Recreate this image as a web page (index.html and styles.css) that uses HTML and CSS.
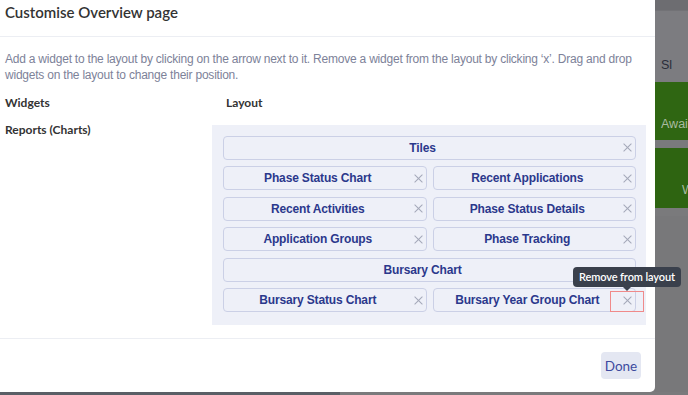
FILE: index.html
```html
<!DOCTYPE html>
<html>
<head>
<meta charset="utf-8">
<link rel="stylesheet" href="styles.css">
</head>
<body>
<div class="page">
  <div class="modal">
    <div class="modal-header">
      <h1 class="title">Customise Overview page</h1>
    </div>
    <div class="modal-body">
      <p class="desc">Add a widget to the layout by clicking on the arrow next to it. Remove a widget from the layout by clicking ‘x’. Drag and drop widgets on the layout to change their position.</p>
      <div class="columns">
        <div class="label">Widgets</div>
        <div class="label label-layout">Layout</div>
        <div class="label label-sub">Reports (Charts)</div>
        <div class="layout-box">
          <div class="tile tile-full"><span class="tile-name">Tiles</span><span class="x"></span></div>
          <div class="tile"><span class="tile-name">Phase Status Chart</span><span class="x"></span></div>
          <div class="tile"><span class="tile-name">Recent Applications</span><span class="x"></span></div>
          <div class="tile"><span class="tile-name">Recent Activities</span><span class="x"></span></div>
          <div class="tile"><span class="tile-name">Phase Status Details</span><span class="x"></span></div>
          <div class="tile"><span class="tile-name">Application Groups</span><span class="x"></span></div>
          <div class="tile"><span class="tile-name">Phase Tracking</span><span class="x"></span></div>
          <div class="tile tile-full"><span class="tile-name">Bursary Chart</span></div>
          <div class="tile"><span class="tile-name">Bursary Status Chart</span><span class="x"></span></div>
          <div class="tile tile-hover"><span class="tile-name">Bursary Year Group Chart</span><span class="x"></span>
            <span class="highlight"></span>
            <span class="tooltip">Remove from layout</span>
          </div>
        </div>
      </div>
    </div>
    <div class="modal-footer">
      <button class="done">Done</button>
    </div>
  </div>
  <div class="backdrop">
    <div class="bd-top"></div>
    <div class="bd-bar"><span class="bd-text">Sl</span></div>
    <div class="bd-green"><span class="bd-gtext">Awai</span></div>
    <div class="bd-green bd-green2"><span class="bd-gtext bd-w">W</span></div>
    <div class="bd-rest"></div>
  </div>
</div>
<div class="bottom-strip"><span class="strip-a"></span><span class="strip-b"></span></div>
</body>
</html>
```

FILE: styles.css
```css
* { box-sizing: border-box; }
html, body { margin: 0; padding: 0; }
body {
  width: 688px;
  height: 395px;
  overflow: hidden;
  background: #7a7a7c;
  font-family: "Liberation Sans", Arial, sans-serif;
}
.page {
  display: flex;
  height: 392px;
}
.modal {
  width: 655px;
  flex: none;
  height: 392px;
  background: #fff;
  border-radius: 0 0 5px 0;
  display: flex;
  flex-direction: column;
}
.modal-header {
  height: 37px;
  border-bottom: 1px solid #eceef3;
  padding: 3px 5px 0;
}
.title {
  margin: 0;
  font-family: "Lato", sans-serif;
  font-weight: 600;
  font-size: 15px;
  line-height: 18px;
  color: #333;
}
.modal-body {
  padding: 14px 5px 0;
  height: 302px;
  border-bottom: 1px solid #eceef3;
}
.desc {
  margin: 0;
  font-family: "Liberation Sans", Arial, sans-serif;
  font-size: 12px;
  letter-spacing: -0.22px;
  line-height: 16px;
  color: #7d8299;
}
.columns {
  display: grid;
  grid-template-columns: 207px 434px;
  grid-template-rows: 27px auto;
  margin-top: 12px;
}
.label {
  font-family: "Lato", sans-serif;
  font-weight: 700;
  font-size: 12px;
  line-height: 16px;
  color: #333;
}
.label-layout { padding-left: 14px; }
.layout-box {
  margin-top: 3px;
  background: #eef0f8;
  height: 200px;
  padding: 10.5px 10px 0 11px;
  display: grid;
  grid-template-columns: 1fr 1fr;
  column-gap: 6px;
  row-gap: 6.5px;
  grid-auto-rows: 24px;
  align-content: start;
}
.tile {
  position: relative;
  border: 1px solid #cbd0e6;
  border-radius: 4px;
  background: #eef0f8;
  display: flex;
  align-items: center;
  justify-content: center;
  padding: 0 24px 0 10px;
}
.tile-full { grid-column: 1 / -1; }
.tile-name {
  font-family: "Liberation Sans", Arial, sans-serif;
  font-weight: 700;
  font-size: 12px;
  letter-spacing: -0.15px;
  color: #2b388c;
  white-space: nowrap;
}
.x {
  position: absolute;
  right: 3px;
  top: 6.5px;
  width: 9px;
  height: 9px;
}
.x::before, .x::after {
  content: "";
  position: absolute;
  left: -1px;
  top: 4px;
  width: 11px;
  height: 1px;
  background: #a4a8b8;
  transform: rotate(45deg);
}
.x::after { transform: rotate(-45deg); }
.highlight {
  position: absolute;
  right: -9px;
  top: 2px;
  width: 34px;
  height: 21px;
  border: 1px solid #f08a8a;
}
.tooltip {
  position: absolute;
  right: -46px;
  top: -22px;
  height: 20px;
  padding: 0 6px;
  background: #3a404c;
  color: #fff;
  border-radius: 4px;
  font-family: "Lato", sans-serif;
  font-weight: 600;
  font-size: 11px;
  letter-spacing: -0.1px;
  line-height: 20px;
  white-space: nowrap;
}
.tooltip::after {
  content: "";
  position: absolute;
  left: 50px;
  bottom: -4px;
  border-left: 4px solid transparent;
  border-right: 4px solid transparent;
  border-top: 4px solid #3a404c;
}
.modal-footer {
  flex: 1;
  display: flex;
  justify-content: flex-end;
  align-items: flex-start;
  padding: 13px 14px 0 0;
}
.done {
  width: 40px;
  height: 27px;
  border: none;
  border-radius: 4px;
  background: #e4e7f2;
  color: #3d4a9e;
  font-family: "Lato", sans-serif;
  font-size: 13.5px;
  padding: 0;
}
.backdrop {
  flex: 1;
  display: flex;
  flex-direction: column;
  overflow: hidden;
}
.bd-top { height: 10px; background: #6d6d71; }
.bd-bar {
  height: 72px;
  background: #7c7c80;
  border-top: 1px solid #727276;
  padding-top: 44px;
}
.bd-text, .bd-gtext {
  font-family: "Liberation Sans", Arial, sans-serif;
  font-size: 12.5px;
  white-space: nowrap;
}
.bd-text { color: #2a2d3a; padding-left: 6px; }
.bd-green {
  height: 58px;
  background: #2f6612;
  padding-top: 32px;
  margin-bottom: 8px;
}
.bd-gtext { color: #a9bba0; padding-left: 6px; }
.bd-green2 { height: 60px; padding-top: 32px; background: #2e6411; }
.bd-w { padding-left: 27px; }
.bd-rest { flex: 1; background: #78787a; }
.bottom-strip {
  display: flex;
  height: 3px;
}
.strip-a { width: 340px; background: #5a5f66; }
.strip-b { flex: 1; background: #7a7a7c; }
```
